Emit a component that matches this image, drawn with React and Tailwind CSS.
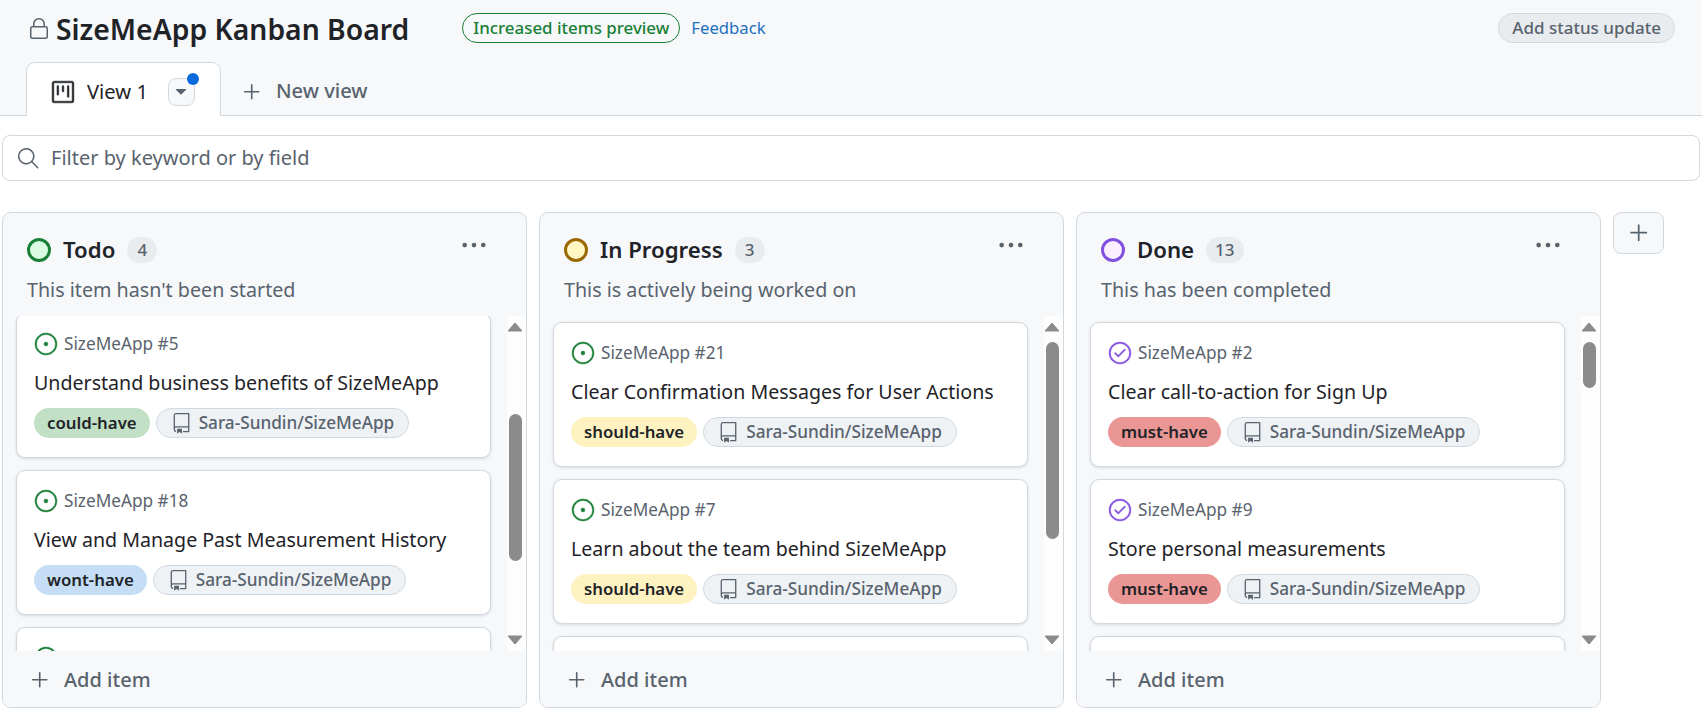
import React from 'react'
import {
  GoLock, GoProject, GoTriangleDown, GoPlus, GoSearch, GoKebabHorizontal,
  GoIssueOpened, GoIssueClosed, GoRepo,
} from 'react-icons/go'

const labels = {
  could: { text: 'could-have', cls: 'bg-[#c2e0c6]' },
  wont: { text: 'wont-have', cls: 'bg-[#c5def5]' },
  should: { text: 'should-have', cls: 'bg-[#fef2c0]' },
  must: { text: 'must-have', cls: 'bg-[#e99695]' },
}

const columns = [
  {
    name: 'Todo', count: 4, desc: "This item hasn't been started",
    dot: 'border-[#1a7f37] bg-[#dafbe1]', listCls: '-mt-[3px]', thumbCls: 'mt-[82px] h-[147px]',
    cards: [
      { num: 5, title: 'Understand business benefits of SizeMeApp', label: 'could' },
      { num: 18, title: 'View and Manage Past Measurement History', label: 'wont' },
      { num: 0 },
    ],
  },
  {
    name: 'In Progress', count: 3, desc: 'This is actively being worked on',
    dot: 'border-[#9a6700] bg-[#fff8c5]', listCls: 'mt-[6px]', thumbCls: 'mt-[10px] h-[197px]',
    cards: [
      { num: 21, title: 'Clear Confirmation Messages for User Actions', label: 'should' },
      { num: 7, title: 'Learn about the team behind SizeMeApp', label: 'should' },
      { num: 0 },
    ],
  },
  {
    name: 'Done', count: 13, desc: 'This has been completed',
    dot: 'border-[#8250df] bg-[#fbefff]', listCls: 'mt-[6px]', thumbCls: 'mt-[10px] h-[46px]',
    cards: [
      { num: 2, title: 'Clear call-to-action for Sign Up', label: 'must', closed: true },
      { num: 9, title: 'Store personal measurements', label: 'must', closed: true },
      { num: 0, closed: true },
    ],
  },
]

function Arrow({ down }) {
  return (
    <svg width="16" height="10" viewBox="0 0 16 10" className={`shrink-0 text-[#8a8a8a] ${down ? 'mb-[6px] mt-auto rotate-180' : ''}`}>
      <path d="M8 1 L15 9 L1 9 Z" fill="currentColor" stroke="currentColor" strokeLinejoin="round" />
    </svg>
  )
}

function Card({ card }) {
  const label = labels[card.label]
  return (
    <div className="h-[144.5px] shrink-0 rounded-[9px] border border-[#d1d9e0] bg-white pl-[17px] pr-3 pt-[18px] shadow-[0_1px_3px_rgba(31,35,40,0.14)]">
      <div className="flex h-[24px] items-center gap-[6px] whitespace-nowrap text-[17.2px] text-[#59636e]">
        {card.closed
          ? <GoIssueClosed size={24} className="stroke-[0.4] text-[#8250df]" />
          : <GoIssueOpened size={24} className="stroke-[0.4] text-[#1a7f37]" />}
        {card.num > 0 && <span>SizeMeApp #{card.num}</span>}
      </div>
      {card.title && (
        <>
          <div className="mt-[13px] h-[28px] whitespace-nowrap text-[19.6px] leading-[28px] text-[#1f2328]">{card.title}</div>
          <div className="mt-[11px] flex items-center gap-[6px] whitespace-nowrap">
            <span className={`flex h-[30px] items-center rounded-full px-[13px] text-[16.8px] font-semibold text-[#1f2328] ${label.cls}`}>{label.text}</span>
            <span className="flex h-[30px] items-center gap-[7px] rounded-full border border-[#d1d9e0] bg-[#eff2f5] px-[14px] text-[17.2px] font-medium text-[#59636e]">
              <GoRepo size={21} />
              Sara-Sundin/SizeMeApp
            </span>
          </div>
        </>
      )}
    </div>
  )
}

function Column({ col }) {
  return (
    <div className="flex h-[496px] w-[525px] shrink-0 flex-col overflow-hidden rounded-[9px] border border-[#d1d9e0] bg-[#f6f8fa]">
      <div className="h-[103px] shrink-0 px-6 pt-[23px]">
        <div className="flex h-[28px] items-center whitespace-nowrap">
          <span className={`h-6 w-6 rounded-full border-[3px] ${col.dot}`} />
          <span className="ml-[12px] text-[22.2px] font-semibold text-[#1f2328]">{col.name}</span>
          <span className="ml-[12px] flex h-[26px] min-w-[30px] items-center justify-center rounded-full bg-[#e9ecef] px-[9px] text-[17px] font-medium text-[#59636e]">{col.count}</span>
          <GoKebabHorizontal size={28} className="ml-auto mr-[14px] -translate-y-[5px] text-[#59636e]" />
        </div>
        <div className="mt-[12px] whitespace-nowrap text-[19.7px] leading-[28px] text-[#59636e]">{col.desc}</div>
      </div>
      <div className="flex min-h-0 flex-1">
        <div className="min-w-0 flex-1 overflow-hidden">
          <div className={`ml-[13px] mr-[16px] flex flex-col gap-[12.5px] ${col.listCls}`}>
            {col.cards.map((card, i) => <Card key={i} card={card} />)}
          </div>
        </div>
        <div className="flex w-[19px] shrink-0 flex-col items-center bg-[#fdfdfd] pr-[3px] pt-[6px]">
          <Arrow />
          <div className={`w-[13px] shrink-0 rounded-full bg-[#8b8b8b] ${col.thumbCls}`} />
          <Arrow down />
        </div>
      </div>
      <div className="flex h-[56px] shrink-0 items-center gap-[11px] bg-[#f6f8fa] px-[24px] pt-[2px] text-[20px] font-medium text-[#59636e]">
        <GoPlus size={26} />
        Add item
      </div>
    </div>
  )
}

export default function App() {
  return (
    <div className="h-[708px] overflow-hidden bg-white font-['Noto_Sans',sans-serif]">
      <header className="h-[116px] border-b border-[#d1d9e0] bg-[#f6f8fa]">
        <div className="flex h-[62px] items-start pl-[27px] pr-[27px]">
          <div className="mt-[14px] flex h-[30px] items-center">
            <GoLock size={24} className="text-[#59636e]" />
            <h1 className="ml-[5px] whitespace-nowrap text-[28.3px] font-semibold text-[#1f2328]">SizeMeApp Kanban Board</h1>
          </div>
          <span className="ml-[53px] mt-[13px] flex h-[30px] items-center whitespace-nowrap rounded-full border border-[#1a7f37] px-[10px] text-[16.9px] font-medium text-[#1a7f37]">Increased items preview</span>
          <a href="#" className="ml-[11px] mt-[13px] flex h-[30px] items-center text-[16.7px] text-[#1f6fc0]">Feedback</a>
          <span className="ml-auto mt-[13px] flex h-[30px] items-center whitespace-nowrap rounded-full border border-[#d1d9e0] bg-[#e9ecef] px-[13px] text-[17px] font-medium text-[#59636e]">Add status update</span>
        </div>
        <div className="flex h-[53px] items-stretch pl-[26px]">
          <div className="relative z-10 flex h-[54px] w-[195px] items-center rounded-t-[9px] border border-b-0 border-[#d1d9e0] bg-white pl-[23px] pt-[4px]">
            <GoProject size={26} className="stroke-[0.5] text-[#1f2328]" />
            <span className="ml-[11px] text-[20.2px] text-[#1f2328]">View 1</span>
            <span className="relative ml-[20px] flex h-[28px] w-[27px] items-center justify-center rounded-[8px] border border-[#d1d9e0] bg-[#f6f8fa]">
              <GoTriangleDown size={20} className="text-[#59636e]" />
              <span className="absolute -right-[5px] -top-[6px] h-3 w-3 rounded-full bg-[#0969da]" />
            </span>
          </div>
          <div className="ml-[18px] flex items-center pt-[6px] text-[20.1px] font-medium text-[#59636e]">
            <GoPlus size={26} />
            <span className="ml-[11px]">New view</span>
          </div>
        </div>
      </header>
      <div className="mx-[2px] mt-[19px] flex h-[46px] items-center rounded-[8px] border border-[#d1d9e0] bg-white pl-[13px] text-[20px] text-[#59636e]">
        <GoSearch size={24} />
        <span className="ml-[11px]">Filter by keyword or by field</span>
      </div>
      <div className="mt-[31px] flex items-start gap-[12px] pl-[2px]">
        {columns.map(col => <Column key={col.name} col={col} />)}
        <div className="flex h-[42px] w-[51px] shrink-0 items-center justify-center rounded-[8px] border border-[#d1d9e0] bg-[#f6f8fa] text-[#59636e]">
          <GoPlus size={28} />
        </div>
      </div>
    </div>
  )
}
